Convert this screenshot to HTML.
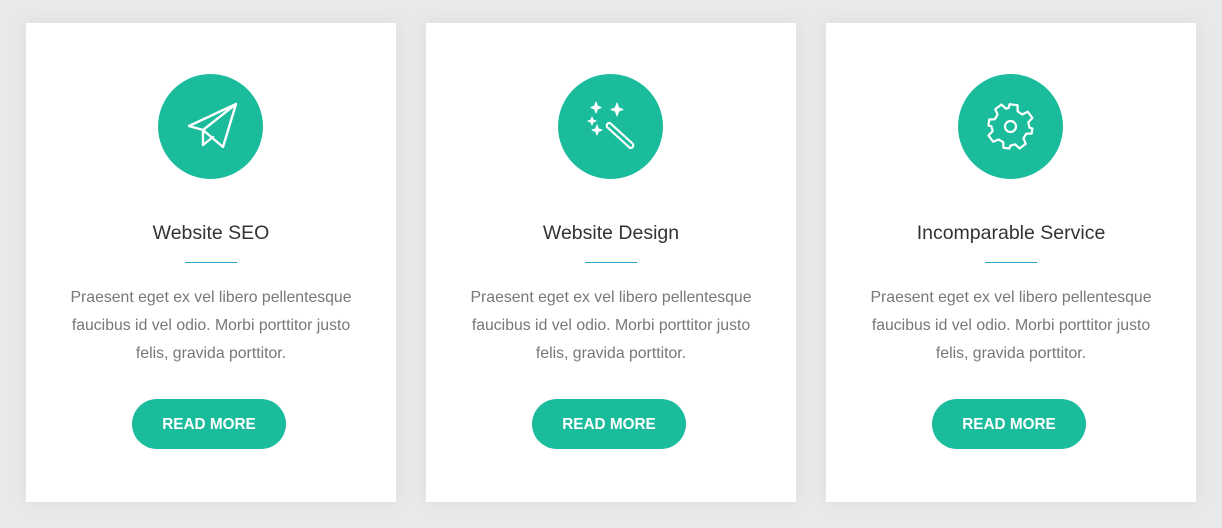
<!DOCTYPE html>
<html><head><style>
body{margin:0;width:1222px;height:528px;background:#e8e9eb;font-family:"Liberation Sans",sans-serif;position:relative;overflow:hidden}
.card{position:absolute;top:23px;width:370px;height:479px;background:#fff;box-shadow:0 0 18px rgba(0,0,0,0.06);text-align:center}
.circ{position:absolute;left:132px;top:51px;width:105px;height:105px;border-radius:50%;background:#1abc9c}
.circ svg{position:absolute;left:0;top:0}
h3{position:absolute;top:199px;left:0;right:0;margin:0;font-weight:normal;font-size:19.5px;color:#333}
.ln{position:absolute;left:159px;top:239px;width:52px;height:1px;background:#2a9fc4}
p{position:absolute;top:261px;left:30px;right:30px;margin:0;font-size:15.8px;line-height:28px;color:#777}
.btn{position:absolute;left:106px;top:376px;width:154px;height:50px;border-radius:25px;background:#1abc9c;color:#fff;font-weight:bold;font-size:15.3px;line-height:51px}
</style></head><body>
<div class="card" style="left:26px">
<div class="circ"><svg width="105" height="105" viewBox="158 74 105 105" fill="none" stroke="#fff" stroke-width="2.4" stroke-linejoin="round" stroke-linecap="round"><path d="M189 126 L236 104 L223 147 L203 130 Z M203 130 L236 104 M203 131 L203 145 L213 137"/></svg></div>
<h3>Website SEO</h3><div class="ln"></div>
<p>Praesent eget ex vel libero pellentesque faucibus id vel odio. Morbi porttitor justo felis, gravida porttitor.</p>
<div class="btn">READ MORE</div></div>
<div class="card" style="left:426px">
<div class="circ"><svg width="105" height="105" viewBox="558 74 105 105" fill="none" stroke="#fff" stroke-width="2.2" stroke-linejoin="round" stroke-linecap="round"><path d="M607 127 L630 148 Q634 148 633 144 L610 123 Q606 123 607 127 Z"/><g fill="#fff" stroke-width="1"><path d="M596 102 L597.5 106 L601 107.5 L597.5 109 L596 113 L594.5 109 L591 107.5 L594.5 106 Z"/><path d="M617 103 L618.8 108 L623 109.5 L618.8 111 L617 116 L615.2 111 L611 109.5 L615.2 108 Z"/><path d="M592 117 L593.2 120 L596 121 L593.2 122 L592 125 L590.8 122 L588 121 L590.8 120 Z"/><path d="M597 125 L598.4 129 L602 130 L598.4 131.5 L597 135 L595.6 131.5 L592 130 L595.6 129 Z"/></g></svg></div>
<h3>Website Design</h3><div class="ln"></div>
<p>Praesent eget ex vel libero pellentesque faucibus id vel odio. Morbi porttitor justo felis, gravida porttitor.</p>
<div class="btn">READ MORE</div></div>
<div class="card" style="left:826px">
<div class="circ"><svg width="105" height="105" viewBox="-52.5 -52.5 105 105" fill="none" stroke="#fff" stroke-width="2.2" stroke-linejoin="round"><circle r="5.5"/><path d="M-4 -22 L4 -22 L5 -16 L10 -13.5 L15 -17 L20.5 -11.5 L17 -6.5 L19 -1.5 L22 -1 L22 4 L16.5 5 L14.5 10 L17.5 15 L12 20.5 L7 17 L2.5 19 L2 22 L-4 22 L-5 16.5 L-10 14.5 L-15 17.5 L-20.5 12 L-17 7 L-19 2.5 L-22 2 L-22 -4 L-16.5 -5 L-14.5 -10 L-17.5 -15 L-12 -20.5 L-7 -17 L-4.5 -18 Z" transform="rotate(8)"/></svg></div>
<h3>Incomparable Service</h3><div class="ln"></div>
<p>Praesent eget ex vel libero pellentesque faucibus id vel odio. Morbi porttitor justo felis, gravida porttitor.</p>
<div class="btn">READ MORE</div></div>
</body></html>
